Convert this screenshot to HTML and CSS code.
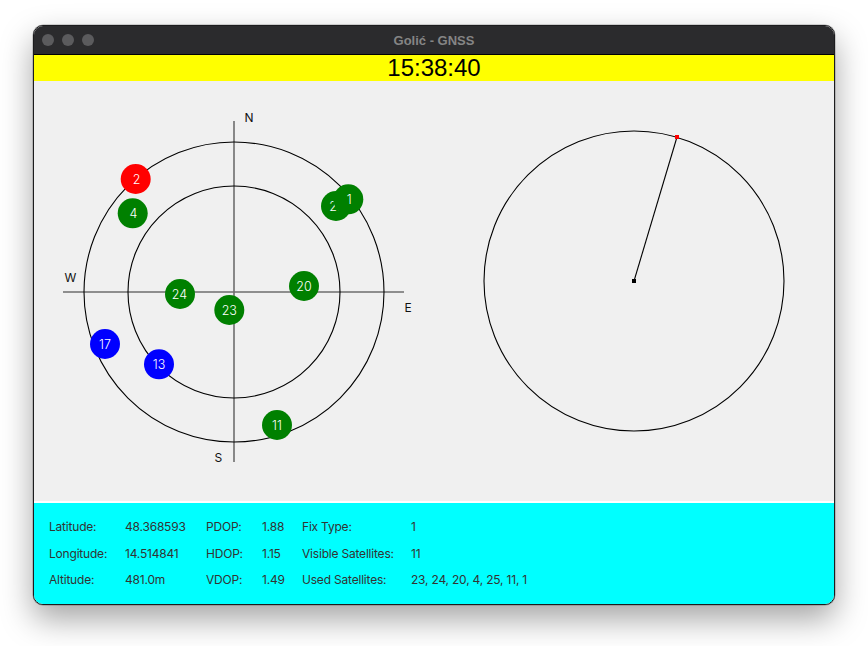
FILE: index.html
```html
<!DOCTYPE html>
<html>
<head>
<meta charset="utf-8">
<link rel="stylesheet" href="styles.css">
</head>
<body>
<div class="window">
  <div class="titlebar">
    <div class="lights"><span class="light"></span><span class="light"></span><span class="light"></span></div>
    <div class="title">Golić - GNSS</div>
  </div>
  <div class="clock">15:38:40</div>
  <div class="canvas">
    <svg class="plot" width="800" height="420" viewBox="0 0 800 420">
      <line class="axis" x1="29" y1="211" x2="370" y2="211"/>
      <line class="axis" x1="200" y1="40" x2="200" y2="381"/>
      <circle class="ring" cx="200" cy="211" r="150"/>
      <circle class="ring" cx="200" cy="211" r="106"/>
      <text class="dir" x="210.5" y="41">N</text>
      <text class="dir" x="30.5" y="201">W</text>
      <text class="dir" x="370.5" y="231">E</text>
      <text class="dir" x="180.5" y="381">S</text>

      <g class="sat red"><circle cx="101.7" cy="98" r="15"/><text x="102.5" y="102.6">2</text></g>
      <g class="sat green"><circle cx="98.7" cy="132.3" r="15"/><text x="99.5" y="136.9">4</text></g>
      <g class="sat green"><circle cx="302" cy="125" r="15"/><text x="302.8" y="129.6">25</text></g>
      <g class="sat green"><circle cx="314.3" cy="118.3" r="15"/><text x="315.1" y="122.9">1</text></g>
      <g class="sat green"><circle cx="146" cy="213" r="15"/><text x="145.5" y="217.6">24</text></g>
      <g class="sat green"><circle cx="195.3" cy="229" r="15"/><text x="195.3" y="233.6">23</text></g>
      <g class="sat blue"><circle cx="71" cy="263" r="15"/><text x="71" y="267.6">17</text></g>
      <g class="sat blue"><circle cx="125" cy="283.3" r="15"/><text x="125" y="287.9">13</text></g>
      <g class="sat green"><circle cx="270" cy="205" r="15"/><text x="270" y="209.6">20</text></g>
      <g class="sat green"><circle cx="243" cy="344" r="15"/><text x="243" y="348.6">11</text></g>

      <circle class="ring" cx="600" cy="200" r="150"/>
      <line class="needle" x1="600" y1="200" x2="643" y2="56"/>
      <rect class="hub" x="598" y="198" width="4" height="4"/>
      <rect class="tip" x="641" y="54" width="4" height="4"/>
    </svg>
  </div>
  <div class="info">
    <div class="grid">
      <span>Latitude:</span><span>48.368593</span><span>PDOP:</span><span>1.88</span><span>Fix Type:</span><span>1</span>
      <span>Longitude:</span><span>14.514841</span><span>HDOP:</span><span>1.15</span><span>Visible Satellites:</span><span>11</span>
      <span>Altitude:</span><span>481.0m</span><span>VDOP:</span><span>1.49</span><span>Used Satellites:</span><span>23, 24, 20, 4, 25, 11, 1</span>
    </div>
  </div>
</div>
</body>
</html>
```
FILE: styles.css
```css
html, body {
  margin: 0;
  padding: 0;
  background: #ffffff;
}
body {
  width: 868px;
  height: 646px;
  padding: 25px 33px 0 33px;
  box-sizing: border-box;
  overflow: hidden;
}
.window {
  width: 802px;
  height: 580px;
  box-sizing: border-box;
  border: 1px solid #1c1c1e;
  border-radius: 10px;
  overflow: hidden;
  display: flex;
  flex-direction: column;
  box-shadow: 0 14px 32px rgba(0, 0, 0, 0.36), 0 0 0 0.5px rgba(0,0,0,0.3);
  background: #f0f0f0;
}
.titlebar {
  height: 28px;
  flex: none;
  background: #2b2b2d;
  border-bottom: 1px solid #000;
  position: relative;
  display: flex;
  align-items: center;
  justify-content: center;
}
.lights {
  position: absolute;
  left: 8px;
  top: 8px;
  display: flex;
  gap: 8px;
}
.light {
  width: 12px;
  height: 12px;
  border-radius: 50%;
  background: #5b5b5d;
}
.title {
  font-family: "Liberation Sans", Arial, sans-serif;
  font-weight: bold;
  font-size: 13px;
  color: #858585;
  margin-top: 1px;
}
.clock {
  flex: none;
  height: 26px;
  line-height: 26px;
  background: #ffff00;
  text-align: center;
  font-family: "Liberation Sans", Arial, sans-serif;
  font-size: 24px;
  color: #000;
}
.canvas {
  flex: none;
  height: 420px;
  background: #f0f0f0;
  border-bottom: 2px solid #ffffff;
}
.plot {
  display: block;
}
.axis {
  stroke: #6e6e6e;
  stroke-width: 1.6;
}
.ring {
  fill: none;
  stroke: #000;
  stroke-width: 1.1;
}
.dir {
  font-family: "Inter", "Liberation Sans", sans-serif;
  font-size: 12px;
  fill: #111;
}
.sat text {
  font-family: "Inter", "Liberation Sans", sans-serif;
  font-size: 12.5px;
  font-weight: 300;
  fill: #ffffff;
  text-anchor: middle;
}
.red circle { fill: #ff0000; }
.green circle { fill: #008000; }
.blue circle { fill: #0000ff; }
.needle {
  stroke: #000;
  stroke-width: 1.1;
}
.hub { fill: #000; }
.tip { fill: #ff0000; }
.info {
  flex: 1;
  background: #00ffff;
  padding: 11px 0 0 15px;
}
.grid {
  display: grid;
  grid-template-columns: 76px 81px 56px 40px 109px auto;
  grid-auto-rows: 26.7px;
  line-height: 26.7px;
  font-family: "Inter", "Liberation Sans", sans-serif;
  font-size: 12px;
  letter-spacing: -0.2px;
  color: #333333;
}
```
